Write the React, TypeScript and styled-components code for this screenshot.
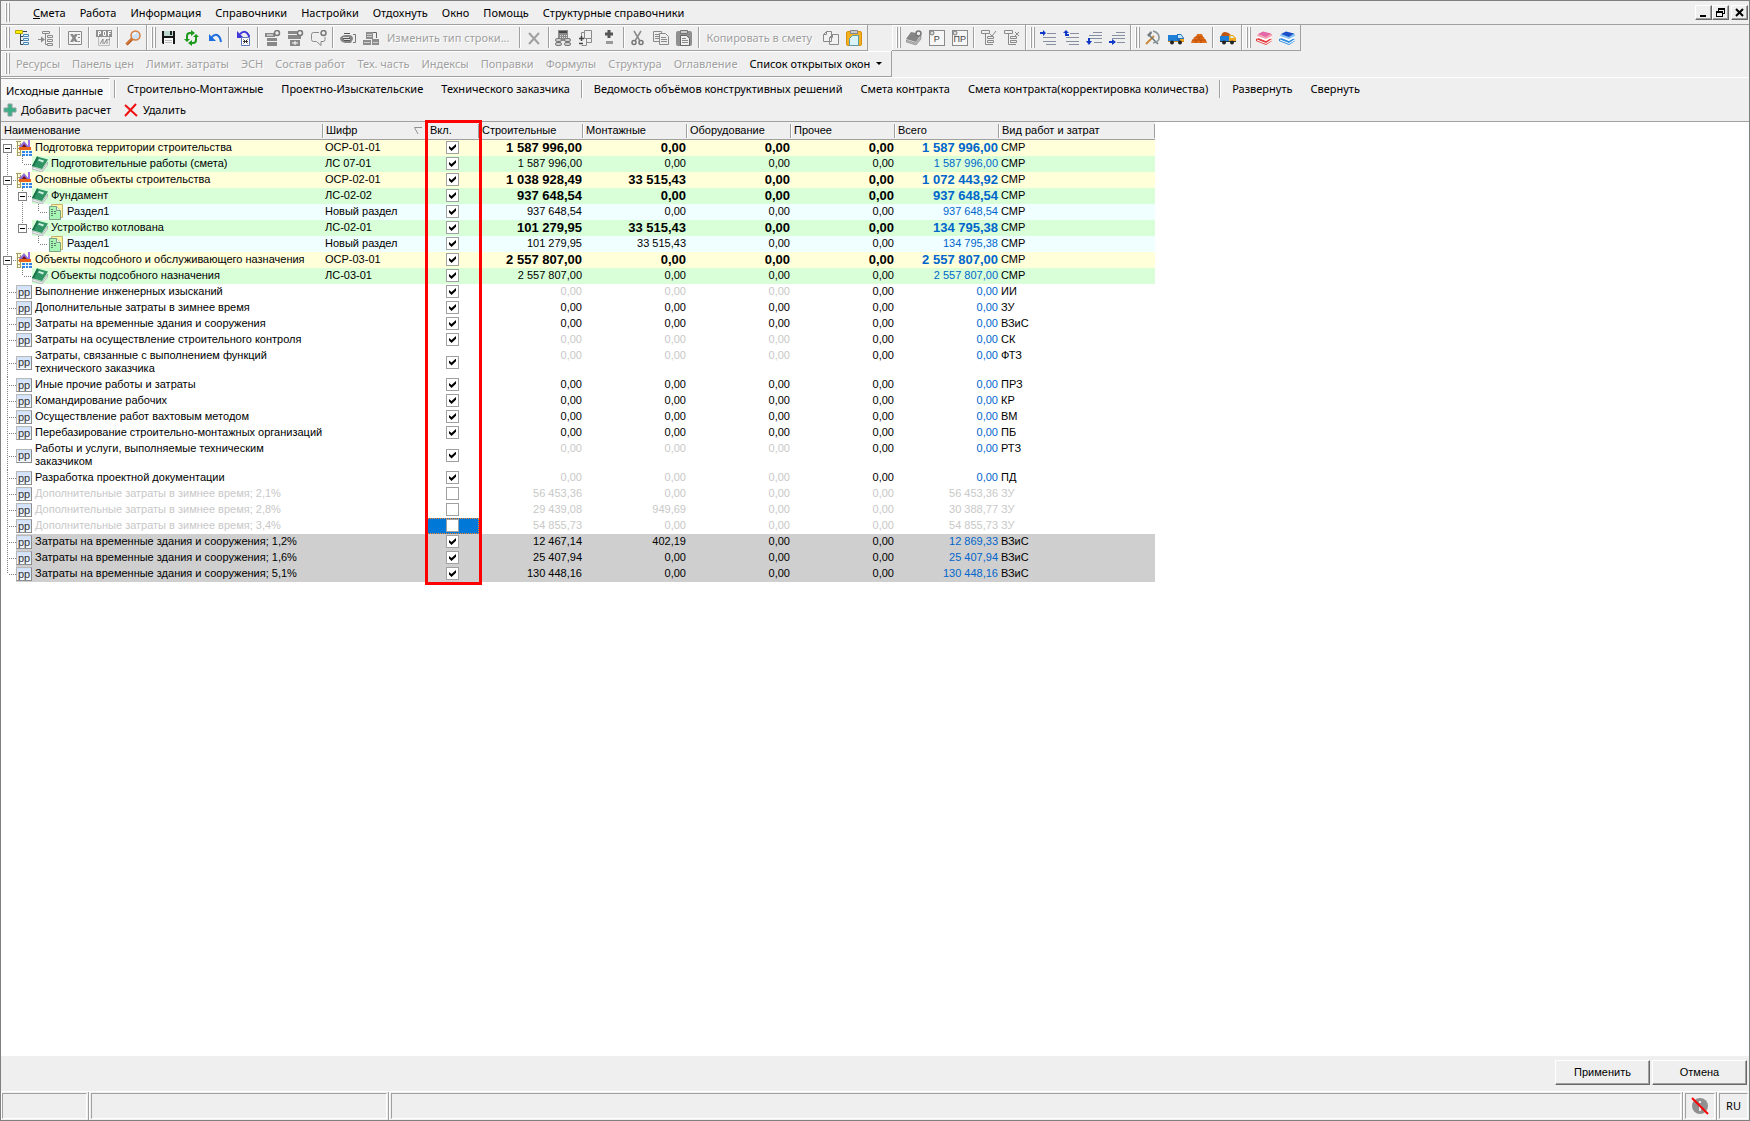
import React from "react";
import styled, { createGlobalStyle, css } from "styled-components";

const face = "#efefef";
const edge = "#a0a0a0";
const frame = "#808080";
const uiFont = '"Noto Sans", "Open Sans", sans-serif';
const gridFont = '"Liberation Sans", Arial, sans-serif';

const GlobalStyle = createGlobalStyle`
  *, *::before, *::after { box-sizing: border-box; }
  body { margin: 0; background: ${face}; }
`;

const Window = styled.div`
  display: flex;
  flex-direction: column;
  min-height: 100vh;
  border: 1px solid ${frame};
  background: ${face};
  color: #000;
  font: 11px/16px ${uiFont};
`;

/* ---------- bars ---------- */

const Band = styled.div<{ $gap?: boolean }>`
  display: flex;
  align-items: stretch;
  white-space: nowrap;
  gap: ${(p) => (p.$gap ? "24px" : "0")};
`;

const MenuBar = styled.nav`
  display: flex;
  align-items: center;
  height: 24px;
  border-bottom: 1px solid ${edge};
`;

const MenuItems = styled.div`
  display: flex;
  flex: 1;
  padding-left: 15px;
`;

const Grip = styled.span`
  flex: none;
  align-self: stretch;
  width: 6px;
  margin: 2px 0 2px 4px;
  background: linear-gradient(
    90deg,
    #fff 0 1px,
    ${edge} 1px 2px,
    ${face} 2px 3px,
    #fff 3px 4px,
    ${edge} 4px 5px,
    ${face} 5px
  );
`;

const plainButton = css`
  appearance: none;
  margin: 0;
  border: 0;
  background: none;
  color: inherit;
  font: inherit;
  white-space: nowrap;
`;

const MenuButton = styled.button`
  ${plainButton}
  padding: 0 7px;
`;

const WindowButtons = styled.div`
  display: flex;
  padding-right: 1px;
`;

const WindowButton = styled.button<{ $apart?: boolean }>`
  ${plainButton}
  display: grid;
  place-items: center;
  width: 17px;
  height: 15px;
  padding: 0;
  margin-left: ${(p) => (p.$apart ? "2px" : "0")};
  border: 1px solid;
  border-color: #fff #696969 #696969 #fff;
  box-shadow: inset -1px -1px 0 ${edge};
`;

const Toolbar = styled.div`
  display: flex;
  align-items: center;
  height: 26px;
  padding-right: 2px;
  border-right: 1px solid ${edge};
  border-bottom: 1px solid ${edge};
  box-shadow: inset 1px 1px 0 #fff;
`;

const IconButton = styled.button`
  ${plainButton}
  display: grid;
  place-items: center;
  width: 23px;
  height: 22px;
  padding: 0;
`;

const TextButton = styled.button`
  ${plainButton}
  padding: 0 7px 0 5px;
  &:disabled {
    color: ${edge};
    text-shadow: 1px 1px 0 #fff;
  }
`;

const Separator = styled.span`
  flex: none;
  align-self: stretch;
  width: 6px;
  margin: 2px 0;
  background: linear-gradient(90deg, transparent 0 2px, ${edge} 2px 3px, #fff 3px 4px, transparent 4px);
`;

const Caret = styled.span`
  display: inline-block;
  margin-left: 6px;
  vertical-align: 3px;
  border: 3px solid transparent;
  border-top-color: #000;
  border-bottom: 0;
`;

const TabRow = styled.div`
  display: flex;
  align-items: stretch;
  height: 23px;
  border-top: 1px solid #fff;
`;

const Tab = styled.button<{ $active?: boolean }>`
  ${plainButton}
  padding: 0 9px;
  ${(p) =>
    p.$active &&
    css`
      padding: 2px 6px 0 5px;
      margin-right: 2px;
      border-top: 1px solid ${edge};
      border-right: 1px solid #fff;
      background: #f8f8f8;
    `}
`;

const ActionRow = styled.div`
  display: flex;
  align-items: center;
  height: 22px;
  border-bottom: 1px solid ${edge};
`;

const ActionButton = styled.button`
  ${plainButton}
  display: flex;
  align-items: center;
  gap: 4px;
  padding: 0 10px 2px 2px;
`;

/* ---------- grid ---------- */

const Sheet = styled.main`
  position: relative;
  flex: 1;
  background: #fff;
  font: 11px/13px ${gridFont};
`;

const Grid = styled.table`
  width: 1154px;
  table-layout: fixed;
  border-collapse: separate;
  border-spacing: 0;
`;

const Th = styled.th`
  height: 18px;
  padding: 0 0 0 3px;
  border-bottom: 1px solid ${edge};
  background:
    linear-gradient(${edge}, ${edge}) right 2px / 1px 14px no-repeat,
    linear-gradient(#fff, #fff) left 2px / 1px 14px no-repeat,
    ${face};
  font-weight: 400;
  text-align: left;
  white-space: nowrap;
`;

const HeadFlex = styled.span`
  display: flex;
  align-items: center;
  justify-content: space-between;
  padding-right: 4px;
`;

const Row = styled.tr<{ $bg: string; $off?: boolean }>`
  --row: ${(p) => p.$bg};
  color: ${(p) => (p.$off ? "#c8c8c8" : "#000")};
`;

const cell = css`
  padding: 1px 1px 2px 2px;
  background: var(--row);
  vertical-align: top;
  white-space: nowrap;
`;

const Td = styled.td`
  ${cell}
`;

const NameTd = styled.td`
  padding: 0;
`;

const CheckTd = styled.td<{ $selected?: boolean }>`
  padding: 0 1px 1px 0;
  background: ${(p) => (p.$selected ? "#0078d7" : "var(--row)")};
  outline: ${(p) => (p.$selected ? "1px dotted #ff8728" : "none")};
  outline-offset: -1px;
  vertical-align: middle;
`;

const NumTd = styled.td<{ $bold?: boolean; $dim?: boolean; $total?: boolean }>`
  ${cell}
  text-align: right;
  ${(p) => p.$bold && "font-weight: 700; font-size: 13px;"}
  ${(p) => p.$dim && "color: #c8c8c8;"}
  ${(p) => p.$total && "color: #0066cc;"}
`;

const NameFlex = styled.div`
  display: flex;
  align-items: stretch;
`;

const Guide = styled.span<{ $line: "pass" | "tee" | "end" | "none"; $first?: boolean; $start?: boolean }>`
  position: relative;
  flex: none;
  width: ${(p) => (p.$first ? "15px" : "16px")};
  &::before {
    content: "";
    display: ${(p) => (p.$line === "none" ? "none" : "block")};
    position: absolute;
    left: 6px;
    top: ${(p) => (p.$start ? "50%" : "0")};
    bottom: ${(p) => (p.$line === "end" ? "50%" : "0")};
    width: 1px;
    background: repeating-linear-gradient(#808080 0 1px, transparent 1px 2px);
  }
  &::after {
    content: "";
    display: ${(p) => (p.$line === "tee" || p.$line === "end" ? "block" : "none")};
    position: absolute;
    left: 8px;
    right: 0;
    top: 50%;
    height: 1px;
    background: repeating-linear-gradient(90deg, #808080 0 1px, transparent 1px 2px);
  }
`;

const Toggle = styled.button`
  ${plainButton}
  position: absolute;
  z-index: 1;
  left: 2px;
  top: 4px;
  width: 9px;
  height: 9px;
  padding: 0;
  border: 1px solid #808080;
  background: linear-gradient(#000, #000) center / 5px 1px no-repeat #fff;
`;

const NameBody = styled.div`
  display: flex;
  flex: 1;
  align-items: center;
  background: var(--row);
`;

const NameText = styled.span`
  padding: 1px 0 2px 3px;
  white-space: pre-line;
`;

const NodeBadge = styled.span`
  display: grid;
  place-items: center;
  flex: none;
  width: 16px;
  height: 14px;
  border: 1px solid #b8b8b8;
  border-bottom-color: #8c8c8c;
  border-right-color: #8c8c8c;
  background: linear-gradient(#cfe0fa, #f4f8ff);
  color: #333;
  font: 11px/11px ${gridFont};
`;

const Check = styled.input`
  appearance: none;
  display: block;
  width: 13px;
  height: 13px;
  margin: 0 auto;
  border: 1px solid #a0a0a0;
  background: #fff;
  &:checked::before {
    content: "";
    display: block;
    width: 7px;
    height: 7px;
    margin: 2px;
    background: #000;
    clip-path: polygon(0 28%, 36% 58%, 100% 0, 100% 38%, 36% 100%, 0 66%);
  }
`;

const Highlight = styled.div`
  position: absolute;
  left: 424px;
  top: -2px;
  width: 57px;
  height: 465px;
  border: 3px solid #ff0000;
  pointer-events: none;
`;

/* ---------- footer ---------- */

const Footer = styled.div`
  display: flex;
  justify-content: flex-end;
  gap: 2px;
  padding: 4px 2px 6px;
`;

const PushButton = styled.button`
  ${plainButton}
  width: 95px;
  height: 25px;
  padding: 0;
  border: 1px solid;
  border-color: #fff #696969 #696969 #fff;
  box-shadow: inset -1px -1px 0 ${edge};
  font: 11px/13px ${gridFont};
`;

const StatusBar = styled.footer`
  display: flex;
  height: 29px;
  border-top: 1px solid #fff;
`;

const StatusCell = styled.div<{ $width?: number }>`
  display: flex;
  flex: ${(p) => (p.$width ? `0 0 ${p.$width}px` : "1")};
  padding: 1px 1px 1px 2px;
  border-right: 1px solid ${edge};
  box-shadow: inset 1px 0 0 #fff;
  &:first-child {
    padding-left: 1px;
  }
  &:last-child {
    border-right: 0;
  }
`;

const StatusInset = styled.div`
  display: grid;
  place-items: center;
  flex: 1;
  border: 1px solid;
  border-color: ${edge} #fff #fff ${edge};
`;

/* ---------- icons ---------- */

const Svg = ({ children, w = 16, h = 16 }: { children: React.ReactNode; w?: number; h?: number }) => (
  <svg width={w} height={h} viewBox={`0 0 ${w} ${h}`} fill="none" aria-hidden="true">
    {children}
  </svg>
);

const g = "#8a8a8a";

const icons: Record<string, React.ReactNode> = {
  tree: (
    <Svg>
      <path d="M0.500 0.500h7v3h-7z" fill="#ffee00" stroke="#b8a800" />
      <path d="M8 1.500h4M5.500 4v10.500H8M5.500 6.500H8M5.500 10.500H8" stroke="#345" />
      <path d="M8.500 4.500h5v2h-5zM8.500 8.500h5v2h-5zM8.500 12.500h5v2h-5z" fill="#dff" stroke="#4a86b6" />
    </Svg>
  ),
  treeIn: (
    <Svg>
      <path d="M4.500 1.500h7v2h-7zM9.500 5.500h5v2h-5zM9.500 9.500h5v2h-5zM9.500 13.500h5v2h-5z" stroke={g} />
      <path d="M7.500 4v10.500H9M0 9.500h5" stroke={g} />
      <path d="M3 6.500l4 3-4 3z" fill={g} />
    </Svg>
  ),
  excel: (
    <Svg>
      <path d="M1.500 1.500h13v13h-13z" fill="#f4f4f4" stroke={g} />
      <path d="M3 4h3l5 8H8zM8 4h3l-5 8H3z" fill={g} />
      <path d="M11 4.500h2M11 7.500h2M11 11.500h2" stroke={g} />
    </Svg>
  ),
  pdf: (
    <Svg>
      <path d="M2.500 7v8.500h11V7" stroke="#bbb" />
      <path d="M0 0h16v7H0z" fill="#8f8f8f" />
      <path d="M2.500 6V1.500h2v2h-2M7.500 5.500v-4h2v4zM12.500 6V1.500H15M12.500 3.500h2" stroke="#fff" />
      <path d="M4 14l3-5v5M8 14l3-5v5M12 10l2-1" stroke="#888" />
    </Svg>
  ),
  lens: (
    <Svg>
      <path d="M1.500 14.500l6-6" stroke="#b5541c" strokeWidth="3" />
      <path d="M1.500 14l5-5" stroke="#f59a50" />
      <circle cx="10.500" cy="5.500" r="4.500" fill="#cfe3fb" stroke="#d9813f" strokeWidth="1.500" />
      <path d="M8 5a3 3 0 0 1 3-2" stroke="#fff" strokeWidth="1.500" />
    </Svg>
  ),
  save: (
    <Svg>
      <path d="M1 1h13v13H2l-1-1z" fill="#161616" />
      <path d="M3 1h9v5H3z" fill="#bcd6d0" />
      <path d="M9 1h2v4H9z" fill="#222" />
      <path d="M3 8h9v6H3z" fill="#f7f7f7" />
      <path d="M4 10.500h7M4 12.500h7" stroke="#bbb" />
    </Svg>
  ),
  refresh: (
    <Svg>
      <path d="M3 10V6q0-3 3-3h2M12 6v4q0 3-3 3H7" stroke="#1c9a1c" strokeWidth="2" />
      <path d="M7 0l4 3-4 3zM8 16l-4-3 4-3zM0 9h6l-3 3zM15 7H9l3-3z" fill="#1c9a1c" />
    </Svg>
  ),
  undo: (
    <Svg>
      <path d="M4 8q3-4 6-3t4 7" stroke="#1d6fe0" strokeWidth="2" />
      <path d="M2 4v7h7z" fill="#1d6fe0" />
    </Svg>
  ),
  history: (
    <Svg>
      <path d="M4 4q4-4 7-1 2 2 2 4" stroke="#4038d8" strokeWidth="2" />
      <path d="M1 1v7h7z" fill="#4038d8" />
      <path d="M5.500 7.500h8v8h-8z" fill="#fff" stroke="#5a78b8" />
      <path d="M7.500 9.500l4 4M11.500 9.500l-4 4M7 11.500h5" stroke="#333" />
    </Svg>
  ),
  rowGear1: (
    <Svg>
      <path d="M0 3h10v4H0zM2 8h10v3H2zM2 12h10v4H2z" fill="#888" />
      <path d="M2 5h6" stroke="#fff" />
      <circle cx="12" cy="3" r="2.500" fill="#eee" stroke="#777" strokeWidth="1.500" />
    </Svg>
  ),
  rowGear2: (
    <Svg>
      <path d="M0 1h9v3H0zM0 5h13v4H0zM2 10h10v6H2z" fill="#888" />
      <path d="M4 13h6M7 11v4" stroke="#fff" />
      <circle cx="12" cy="3" r="2.500" fill="#eee" stroke="#777" strokeWidth="1.500" />
    </Svg>
  ),
  noteGear: (
    <Svg>
      <path d="M8 2.500H2.500q-2 0-2 2v5q0 2 2 2h3L10 15.500v-4h2q2 0 2-2V7" stroke={g} />
      <circle cx="12.500" cy="3" r="2.500" fill="#eee" stroke="#777" strokeWidth="1.500" />
    </Svg>
  ),
  helmet: (
    <Svg>
      <path d="M0 8q2-3 6-3h3q4 0 4 4l-2 4H5Q0 12 0 8z" fill="#858585" />
      <path d="M4 3.500h6M3 8.500h7M4 10.500h6" stroke="#555" />
      <path d="M4 9.500h6M3 7.500h6" stroke="#ddd" />
      <path d="M13 4.500h2.500v8H13" stroke="#777" />
    </Svg>
  ),
  cubes: (
    <Svg>
      <path d="M3 2h7v7H3zM0 10h8v5H0zM9 9h7v6H9z" fill="#8d8d8d" />
      <path d="M4 4.500h5M4 6.500h5M1 12.500h6M10 12.500h5" stroke="#ccc" />
      <path d="M10 2.500h3.500V8" stroke="#666" />
    </Svg>
  ),
  cross: (
    <Svg>
      <path d="M3 3l10 11M13 3L3 14" stroke="#a0a0a0" strokeWidth="2" />
    </Svg>
  ),
  calc: (
    <Svg>
      <path d="M3 0h10v11H3z" fill="#8a8a8a" />
      <path d="M4 2h8" stroke="#444" strokeWidth="2" />
      <path d="M5 5.500h7M5 7.500h7" stroke="#ddd" strokeDasharray="1 1" />
      <rect x="0.500" y="8.500" width="6" height="3" rx="1.500" fill="#ccc" stroke="#777" />
      <rect x="0.500" y="12.500" width="6" height="3" rx="1.500" fill="#ccc" stroke="#777" />
      <rect x="9.500" y="8.500" width="6" height="3" rx="1.500" fill="#ccc" stroke="#777" />
      <rect x="9.500" y="12.500" width="6" height="3" rx="1.500" fill="#ccc" stroke="#777" />
    </Svg>
  ),
  pageAdd: (
    <Svg>
      <path d="M6.500 0.500h7v8h-7zM3.500 6V2.500H6M8.500 9v6.500H3.500M8.500 12.500h5V9" stroke={g} />
      <path d="M1 8.500h5M3.500 6v5M1 13.500h4" stroke="#444" strokeWidth="1.500" />
    </Svg>
  ),
  plusMinus: (
    <Svg>
      <path d="M4 4h8M8 0v8" stroke="#555" strokeWidth="3" />
      <path d="M5 12.500h7" stroke="#999" strokeWidth="3" />
    </Svg>
  ),
  cut: (
    <Svg>
      <path d="M4 1l6 10M11 1L5 11" stroke="#8a8a8a" strokeWidth="1.500" />
      <circle cx="4" cy="12.500" r="2" stroke="#777" strokeWidth="1.500" />
      <circle cx="11" cy="12.500" r="2" stroke="#777" strokeWidth="1.500" />
    </Svg>
  ),
  copy: (
    <Svg>
      <path d="M0.500 1.500h8v10h-8z" fill="#eee" stroke={g} />
      <path d="M2 4.500h4M2 6.500h4M2 8.500h4" stroke={g} />
      <path d="M6.500 3.500h6l3 3v8h-9z" fill="#eee" stroke={g} />
      <path d="M8 7.500h5M8 9.500h6M8 11.500h6" stroke={g} />
    </Svg>
  ),
  paste: (
    <Svg>
      <rect x="0" y="1" width="16" height="15" rx="2" fill="#909090" />
      <path d="M4.500 0.500h7v3h-7z" fill="#ccc" stroke="#777" />
      <path d="M4.500 5.500h6l3 3v7h-9z" fill="#eee" stroke="#666" />
      <path d="M6 8.500h4M6 10.500h6M6 12.500h6" stroke={g} />
    </Svg>
  ),
  copyPages: (
    <Svg>
      <path d="M3.500 1.500h5v10h-8v-7zM9.500 4.500h6v10h-9v-7z" fill="#f2f2f2" stroke={g} />
      <path d="M3.500 1.500v3h-3M9.500 4.500v3h-3" stroke={g} />
    </Svg>
  ),
  pasteColor: (
    <Svg>
      <rect x="0.500" y="1.500" width="15" height="14" rx="1.500" fill="#f7b11e" stroke="#d98e0b" />
      <path d="M4.500 0.500h7v3h-7z" fill="#c9c9c9" stroke="#888" />
      <path d="M6.500 5.500h6v10h-9v-7z" fill="#d8f4f6" stroke="#5d9aa5" />
    </Svg>
  ),
  bookGear: (
    <Svg>
      <path d="M0 9l5-7 10 2-5 8z" fill="#858585" />
      <path d="M0 10l10 3 5-7v3l-5 6-10-3z" fill="#b5b5b5" stroke="#777" strokeWidth="0.500" />
      <circle cx="12.500" cy="3.500" r="2.500" fill="#eee" stroke="#777" strokeWidth="1.500" />
    </Svg>
  ),
  treeCheck: (
    <Svg>
      <path d="M0.500 0.500h8v3h-8zM6.500 6.500h6v2h-6zM6.500 10.500h6v2h-6z" stroke={g} />
      <path d="M4.500 4v10.500H12M9 4l2 2 4-5" stroke={g} />
    </Svg>
  ),
  treeCross: (
    <Svg>
      <path d="M0.500 0.500h8v3h-8zM6.500 6.500h6v2h-6zM6.500 10.500h6v2h-6z" stroke={g} />
      <path d="M4.500 4v10.500H12M11 2l4 4M15 2l-4 4" stroke={g} />
    </Svg>
  ),
  hammer: (
    <Svg>
      <path d="M1 14L9 6" stroke="#c98b3a" strokeWidth="2" />
      <path d="M4 5l9 9" stroke="#6c767c" strokeWidth="1.500" />
      <path d="M8 1q7 2 6 8-1 3-6 4" stroke="#8b979c" strokeWidth="1.500" />
      <path d="M2 5l4-4 1 2-3 4z" fill="#707a80" />
    </Svg>
  ),
  truck: (
    <Svg>
      <path d="M0 5h9v6H0z" fill="#1f7fd6" />
      <path d="M9 4h4l3 4v4H9z" fill="#1f6fc4" />
      <path d="M10 5h3l2 3h-5z" fill="#bfe6ff" />
      <path d="M12 9h4v2h-4z" fill="#f2a71b" />
      <path d="M0 11h16v1H0z" fill="#c98b1b" />
      <circle cx="4" cy="12.500" r="2" fill="#222" />
      <circle cx="12" cy="12.500" r="2" fill="#222" />
    </Svg>
  ),
  bricks: (
    <Svg>
      <path d="M6 4h5l1 3H5zM3 7h10l1 3H2zM1 10h14l1 3H0z" fill="#e06c18" />
      <path d="M1 10h14M4 7h8M5 10v3M10 10v3M8 7v3" stroke="#b84c08" />
    </Svg>
  ),
  truckLoad: (
    <Svg>
      <path d="M1 6q1-4 4-4t6 3l-1 1z" fill="#c2560e" />
      <path d="M0 6h9v5H0z" fill="#1f7fd6" />
      <path d="M9 5h4l3 3v4H9z" fill="#f2a71b" />
      <path d="M10.500 6h2l2 2h-4z" fill="#d9f1ff" />
      <path d="M0 11h16v1H0z" fill="#333" />
      <circle cx="4" cy="12.500" r="2" fill="#222" />
      <circle cx="12" cy="12.500" r="2" fill="#222" />
    </Svg>
  ),
};

const arrows = {
  in: "M0 2h3V0l3 3-3 3V4H0z",
  up: "M2 6V3H0l3-3 3 3H4v1h2v2z",
  left: "M4 8v3h2l-3 4-3-4h2V8z",
  out: "M0 11h3V9l4 3-4 3v-2H0z",
};

const Indent = ({ way }: { way: keyof typeof arrows }) => {
  const top = way === "in" || way === "up";
  return (
    <Svg>
      <path
        d={top ? "M7 3.500h9M3 7.500h13M3 11.500h13M6 14.500h10" : "M7 2.500h9M3 5.500h13M3 8.500h13M8 12.500h8"}
        stroke="#8790a0"
      />
      <path d={arrows[way]} fill="#1038c8" />
    </Svg>
  );
};

const Books = ({ dark, mid, light }: { dark: string; mid: string; light: string }) => (
  <Svg>
    <path d="M0 9l6-2 10 2v2l-6 4-10-4z" fill={mid} />
    <path d="M1 9.500l9 3.500 6-4v1.500L10 14l-9-3.500z" fill="#fff" />
    <path d="M1 5l6-3 9 2v3l-6 4-9-4z" fill={light} />
    <path d="M1 6l9 3 6-3v1.500L10 11 1 7.500z" fill="#fff" />
    <path d="M2 4l5-2.500 8 2-5 3.500z" fill={dark} />
  </Svg>
);

const BoxedLetters = styled.span`
  position: relative;
  display: grid;
  place-items: end center;
  width: 16px;
  height: 16px;
  border: 1px solid ${g};
  background: #f6f6f6;
  color: #444;
  font: 9px/11px ${gridFont};
  svg {
    position: absolute;
    left: -1px;
    top: -1px;
  }
`;

const Lettered = ({ text }: { text: string }) => (
  <BoxedLetters>
    {text}
    <Svg w={6} h={6}>
      <circle cx="3" cy="3" r="2" fill="#ddd" stroke="#777" />
    </Svg>
  </BoxedLetters>
);

const HouseIcon = () => (
  <Svg>
    <path d="M1.500 1v15M4.500 3v13" stroke="#a39a70" />
    <path d="M0 1.500h5M2 5.500h2M2 8.500h2M2 12.500h3M1 15.500h4" stroke="#a39a70" />
    <path d="M12 0h2v8h-2z" fill="#a06cf0" />
    <path d="M3 7l5-6 5 6z" fill="#8f6be0" />
    <path d="M5 8l3-4 4 4z" fill="#7a1414" />
    <path d="M3 7h12v3H3z" fill="#e8641b" />
    <path d="M6 11h10v5H6z" fill="#2f86e8" />
    <path d="M9.500 11v5M12.500 11v5M6 13.500h10" stroke="#e6f2ff" />
  </Svg>
);

const BookIcon = () => (
  <Svg>
    <path d="M0 10.500l10 3.500 5.500-8v3L10 16 0 13z" fill="#efeaf4" stroke="#7d8a84" strokeWidth="0.500" />
    <path d="M0 10L5 0.500 16 3.500 10 13z" fill="#2f9463" />
    <path d="M7 3l5 1.500-1 2-5-2z" fill="#cfeedd" />
    <path d="M0 10L5 0.500l1.500 0.500-4.500 9.500z" fill="#1d7049" />
  </Svg>
);

const SectionIcon = () => (
  <Svg>
    <path d="M3.500 0.500h11v13h-11z" fill="#fff3a8" stroke="#c4b46a" />
    <path d="M1.500 2.500h7l4 4v9h-11z" fill="#a6f5b4" stroke="#7ea088" />
    <path d="M8.500 2.500v4h4" stroke="#7ea088" fill="#e6ffe9" />
    <path d="M3 5.500h2M3 7.500h2M3 9.500h2M3 11.500h2M6 7.500h2M6 9.500h2" stroke="#5d7a66" />
  </Svg>
);

/* ---------- data ---------- */

type Kind = "group" | "book" | "section" | "calc";
type Line = "pass" | "tee" | "end" | "none";

interface Item {
  name: string;
  code?: string;
  kind: Kind;
  lines: Line[];
  open?: boolean;
  bold?: boolean;
  bg?: string;
  dim?: boolean;
  off?: boolean;
  selected?: boolean;
  sums: [string, string, string, string, string];
  type: string;
}

const yellow = "#ffffd9";
const green = "#d8ffd8";
const cyan = "#f0ffff";
const gray = "#cfcfcf";
const z = "0,00";

const plain = (name: string, type: string, dim = false): Item => ({
  name, type, dim, kind: "calc", lines: ["tee"], sums: [z, z, z, z, z],
});

const items: Item[] = [
  { name: "Подготовка территории строительства", code: "ОСР-01-01", kind: "group", lines: ["tee"], open: true, bold: true, bg: yellow, sums: ["1 587 996,00", z, z, z, "1 587 996,00"], type: "СМР" },
  { name: "Подготовительные работы (смета)", code: "ЛС 07-01", kind: "book", lines: ["pass", "end"], bg: green, sums: ["1 587 996,00", z, z, z, "1 587 996,00"], type: "СМР" },
  { name: "Основные объекты строительства", code: "ОСР-02-01", kind: "group", lines: ["tee"], open: true, bold: true, bg: yellow, sums: ["1 038 928,49", "33 515,43", z, z, "1 072 443,92"], type: "СМР" },
  { name: "Фундамент", code: "ЛС-02-02", kind: "book", lines: ["pass", "tee"], open: true, bold: true, bg: green, sums: ["937 648,54", z, z, z, "937 648,54"], type: "СМР" },
  { name: "Раздел1", code: "Новый раздел", kind: "section", lines: ["pass", "pass", "end"], bg: cyan, sums: ["937 648,54", z, z, z, "937 648,54"], type: "СМР" },
  { name: "Устройство котлована", code: "ЛС-02-01", kind: "book", lines: ["pass", "end"], open: true, bold: true, bg: green, sums: ["101 279,95", "33 515,43", z, z, "134 795,38"], type: "СМР" },
  { name: "Раздел1", code: "Новый раздел", kind: "section", lines: ["pass", "none", "end"], bg: cyan, sums: ["101 279,95", "33 515,43", z, z, "134 795,38"], type: "СМР" },
  { name: "Объекты подсобного и обслуживающего назначения", code: "ОСР-03-01", kind: "group", lines: ["tee"], open: true, bold: true, bg: yellow, sums: ["2 557 807,00", z, z, z, "2 557 807,00"], type: "СМР" },
  { name: "Объекты подсобного назначения", code: "ЛС-03-01", kind: "book", lines: ["pass", "end"], bg: green, sums: ["2 557 807,00", z, z, z, "2 557 807,00"], type: "СМР" },
  plain("Выполнение инженерных изысканий", "ИИ", true),
  plain("Дополнительные затраты в зимнее время", "ЗУ"),
  plain("Затраты на временные здания и сооружения", "ВЗиС"),
  plain("Затраты на осуществление строительного контроля", "СК", true),
  plain("Затраты, связанные с выполнением функций\nтехнического заказчика", "ФТЗ", true),
  plain("Иные прочие работы и затраты", "ПРЗ"),
  plain("Командирование рабочих", "КР"),
  plain("Осуществление работ вахтовым методом", "ВМ"),
  plain("Перебазирование строительно-монтажных организаций", "ПБ"),
  plain("Работы и услуги, выполняемые техническим\nзаказчиком", "РТЗ", true),
  plain("Разработка проектной документации", "ПД", true),
  { name: "Дополнительные затраты в зимнее время; 2,1%", kind: "calc", lines: ["tee"], off: true, sums: ["56 453,36", z, z, z, "56 453,36"], type: "ЗУ" },
  { name: "Дополнительные затраты в зимнее время; 2,8%", kind: "calc", lines: ["tee"], off: true, sums: ["29 439,08", "949,69", z, z, "30 388,77"], type: "ЗУ" },
  { name: "Дополнительные затраты в зимнее время; 3,4%", kind: "calc", lines: ["tee"], off: true, selected: true, sums: ["54 855,73", z, z, z, "54 855,73"], type: "ЗУ" },
  { name: "Затраты на временные здания и сооружения; 1,2%", kind: "calc", lines: ["tee"], bg: gray, sums: ["12 467,14", "402,19", z, z, "12 869,33"], type: "ВЗиС" },
  { name: "Затраты на временные здания и сооружения; 1,6%", kind: "calc", lines: ["tee"], bg: gray, sums: ["25 407,94", z, z, z, "25 407,94"], type: "ВЗиС" },
  { name: "Затраты на временные здания и сооружения; 5,1%", kind: "calc", lines: ["end"], bg: gray, sums: ["130 448,16", z, z, z, "130 448,16"], type: "ВЗиС" },
];

const nodeIcon: Record<Kind, React.ReactNode> = {
  group: <HouseIcon />,
  book: <BookIcon />,
  section: <SectionIcon />,
  calc: <NodeBadge>pp</NodeBadge>,
};

const menu = ["Работа", "Информация", "Справочники", "Настройки", "Отдохнуть", "Окно", "Помощь", "Структурные справочники"];
const panels = ["Ресурсы", "Панель цен", "Лимит. затраты", "ЭСН", "Состав работ", "Тех. часть", "Индексы", "Поправки", "Формулы", "Структура", "Оглавление"];

const Tool = ({ icon, label }: { icon: React.ReactNode; label: string }) => (
  <IconButton aria-label={label}>{icon}</IconButton>
);

const TreeCell = ({ item, first }: { item: Item; first: boolean }) => (
  <NameFlex>
    {item.lines.map((line, i) => (
      <Guide key={i} $line={line} $first={i === 0} $start={first}>
        {item.open && i === item.lines.length - 1 && <Toggle aria-label="Свернуть узел" />}
      </Guide>
    ))}
    <NameBody>
      {nodeIcon[item.kind]}
      <NameText>{item.name}</NameText>
    </NameBody>
  </NameFlex>
);

export default function App() {
  return (
    <Window>
      <GlobalStyle />
      <MenuBar>
        <Grip />
        <MenuItems>
          <MenuButton><u>С</u>мета</MenuButton>
          {menu.map((m) => <MenuButton key={m}>{m}</MenuButton>)}
        </MenuItems>
        <WindowButtons>
          <WindowButton aria-label="Свернуть окно">
            <Svg w={11} h={9}><path d="M2 7h6v2H2z" fill="#000" /></Svg>
          </WindowButton>
          <WindowButton aria-label="Восстановить окно">
            <Svg w={11} h={9}>
              <path d="M3 0h7v6H8V5h1V2H4v1H3z" fill="#000" />
              <path d="M1 3h7v6H1z" fill="#000" />
              <path d="M2 5h5v3H2z" fill={face} />
            </Svg>
          </WindowButton>
          <WindowButton $apart aria-label="Закрыть окно">
            <Svg w={11} h={9}><path d="M2 1l7 7M9 1L2 8" stroke="#000" strokeWidth="2" /></Svg>
          </WindowButton>
        </WindowButtons>
      </MenuBar>

      <Band $gap>
        <Band>
          <Toolbar>
            <Grip />
            <Tool icon={icons.tree} label="Дерево" />
            <Tool icon={icons.treeIn} label="Вставить в дерево" />
            <Separator />
            <Tool icon={icons.excel} label="Excel" />
            <Separator />
            <Tool icon={icons.pdf} label="PDF" />
            <Separator />
            <Tool icon={icons.lens} label="Поиск" />
          </Toolbar>
          <Toolbar>
            <Grip />
            <Tool icon={icons.save} label="Сохранить" />
            <Tool icon={icons.refresh} label="Обновить" />
            <Tool icon={icons.undo} label="Отменить" />
            <Separator />
            <Tool icon={icons.history} label="История" />
            <Separator />
            <Tool icon={icons.rowGear1} label="Раздел" />
            <Tool icon={icons.rowGear2} label="Подраздел" />
            <Tool icon={icons.noteGear} label="Комментарий" />
            <Separator />
            <Tool icon={icons.helmet} label="Работа" />
            <Tool icon={icons.cubes} label="Материалы" />
            <TextButton disabled>Изменить тип строки...</TextButton>
            <Separator />
            <Tool icon={icons.cross} label="Удалить строку" />
            <Separator />
            <Tool icon={icons.calc} label="Калькулятор" />
            <Tool icon={icons.pageAdd} label="Добавить лист" />
            <Tool icon={icons.plusMinus} label="Плюс минус" />
            <Separator />
            <Tool icon={icons.cut} label="Вырезать" />
            <Tool icon={icons.copy} label="Копировать" />
            <Tool icon={icons.paste} label="Вставить" />
            <Separator />
            <TextButton disabled>Копировать в смету</TextButton>
            <Tool icon={icons.copyPages} label="Копировать страницы" />
            <Tool icon={icons.pasteColor} label="Вставить в смету" />
          </Toolbar>
        </Band>
        <Band>
          <Toolbar>
            <Grip />
            <Tool icon={icons.bookGear} label="Новая смета" />
            <Tool icon={<Lettered text="Р" />} label="Новый раздел" />
            <Tool icon={<Lettered text="ПР" />} label="Новый подраздел" />
            <Separator />
            <Tool icon={icons.treeCheck} label="Включить ветку" />
            <Tool icon={icons.treeCross} label="Исключить ветку" />
          </Toolbar>
          <Toolbar>
            <Grip />
            <Tool icon={<Indent way="in" />} label="Уровень ниже" />
            <Tool icon={<Indent way="up" />} label="Уровень вверх" />
            <Tool icon={<Indent way="left" />} label="Уровень вниз" />
            <Tool icon={<Indent way="out" />} label="Уровень вправо" />
          </Toolbar>
          <Toolbar>
            <Grip />
            <Tool icon={icons.hammer} label="Труд" />
            <Tool icon={icons.truck} label="Машины" />
            <Tool icon={icons.bricks} label="Материалы" />
            <Separator />
            <Tool icon={icons.truckLoad} label="Перевозка" />
          </Toolbar>
          <Toolbar>
            <Grip />
            <Tool icon={<Books dark="#e468a8" mid="#e23b3b" light="#f2a3b4" />} label="Красный справочник" />
            <Tool icon={<Books dark="#1c50c8" mid="#2f8be0" light="#8cc4f2" />} label="Синий справочник" />
          </Toolbar>
        </Band>
      </Band>

      <Band>
        <Toolbar>
          <Grip />
          {panels.map((p) => <TextButton key={p} disabled>{p}</TextButton>)}
          <TextButton>Список открытых окон<Caret /></TextButton>
        </Toolbar>
      </Band>

      <TabRow>
        <Tab $active>Исходные данные</Tab>
        <Separator />
        <Tab>Строительно-Монтажные</Tab>
        <Tab>Проектно-Изыскательские</Tab>
        <Tab>Технического заказчика</Tab>
        <Separator />
        <Tab>Ведомость объёмов конструктивных решений</Tab>
        <Tab>Смета контракта</Tab>
        <Tab>Смета контракта(корректировка количества)</Tab>
        <Separator />
        <Tab>Развернуть</Tab>
        <Tab>Свернуть</Tab>
      </TabRow>

      <ActionRow>
        <ActionButton>
          <Svg w={14} h={14}>
            <path d="M5 1h4v4h4v4H9v4H5V9H1V5h4z" fill="#3cae84" stroke="#8aa0a0" />
          </Svg>
          Добавить расчет
        </ActionButton>
        <ActionButton>
          <Svg w={16} h={14}>
            <path d="M2 2l12 11M13 1L2 13" stroke="#f01010" strokeWidth="2" />
          </Svg>
          Удалить
        </ActionButton>
      </ActionRow>

      <Sheet>
        <Grid>
          <colgroup>
            <col style={{ width: 322 }} />
            <col style={{ width: 104 }} />
            <col style={{ width: 52 }} />
            <col style={{ width: 104 }} />
            <col style={{ width: 104 }} />
            <col style={{ width: 104 }} />
            <col style={{ width: 104 }} />
            <col style={{ width: 104 }} />
            <col />
          </colgroup>
          <thead>
            <tr>
              <Th>Наименование</Th>
              <Th>
                <HeadFlex>
                  Шифр
                  <Svg w={9} h={8}><path d="M8 0.500H0.500L4 7" stroke="#909090" /></Svg>
                </HeadFlex>
              </Th>
              <Th>Вкл.</Th>
              <Th>Строительные</Th>
              <Th>Монтажные</Th>
              <Th>Оборудование</Th>
              <Th>Прочее</Th>
              <Th>Всего</Th>
              <Th>Вид работ и затрат</Th>
            </tr>
          </thead>
          <tbody>
            {items.map((item, i) => (
              <Row key={i} $bg={item.bg ?? "#fff"} $off={item.off}>
                <NameTd><TreeCell item={item} first={i === 0} /></NameTd>
                <Td>{item.code}</Td>
                <CheckTd $selected={item.selected}>
                  <Check type="checkbox" defaultChecked={!item.off} aria-label={item.name} />
                </CheckTd>
                {item.sums.map((sum, k) => (
                  <NumTd key={k} $bold={item.bold} $dim={item.dim && k < 3} $total={k === 4 && !item.off}>
                    {sum}
                  </NumTd>
                ))}
                <Td>{item.type}</Td>
              </Row>
            ))}
          </tbody>
        </Grid>
        <Highlight />
      </Sheet>

      <Footer>
        <PushButton>Применить</PushButton>
        <PushButton>Отмена</PushButton>
      </Footer>

      <StatusBar>
        <StatusCell $width={88}><StatusInset /></StatusCell>
        <StatusCell $width={300}><StatusInset /></StatusCell>
        <StatusCell><StatusInset /></StatusCell>
        <StatusCell $width={34}>
          <StatusInset>
            <Svg w={18} h={18}>
              <circle cx="9" cy="9" r="8" fill="#909090" />
              <path d="M9 8v6M9 4v2" stroke="#e8e8e8" strokeWidth="2" />
              <path d="M1 1l16 16" stroke="#ff0000" strokeWidth="2" />
            </Svg>
          </StatusInset>
        </StatusCell>
        <StatusCell $width={32}><StatusInset>RU</StatusInset></StatusCell>
      </StatusBar>
    </Window>
  );
}
